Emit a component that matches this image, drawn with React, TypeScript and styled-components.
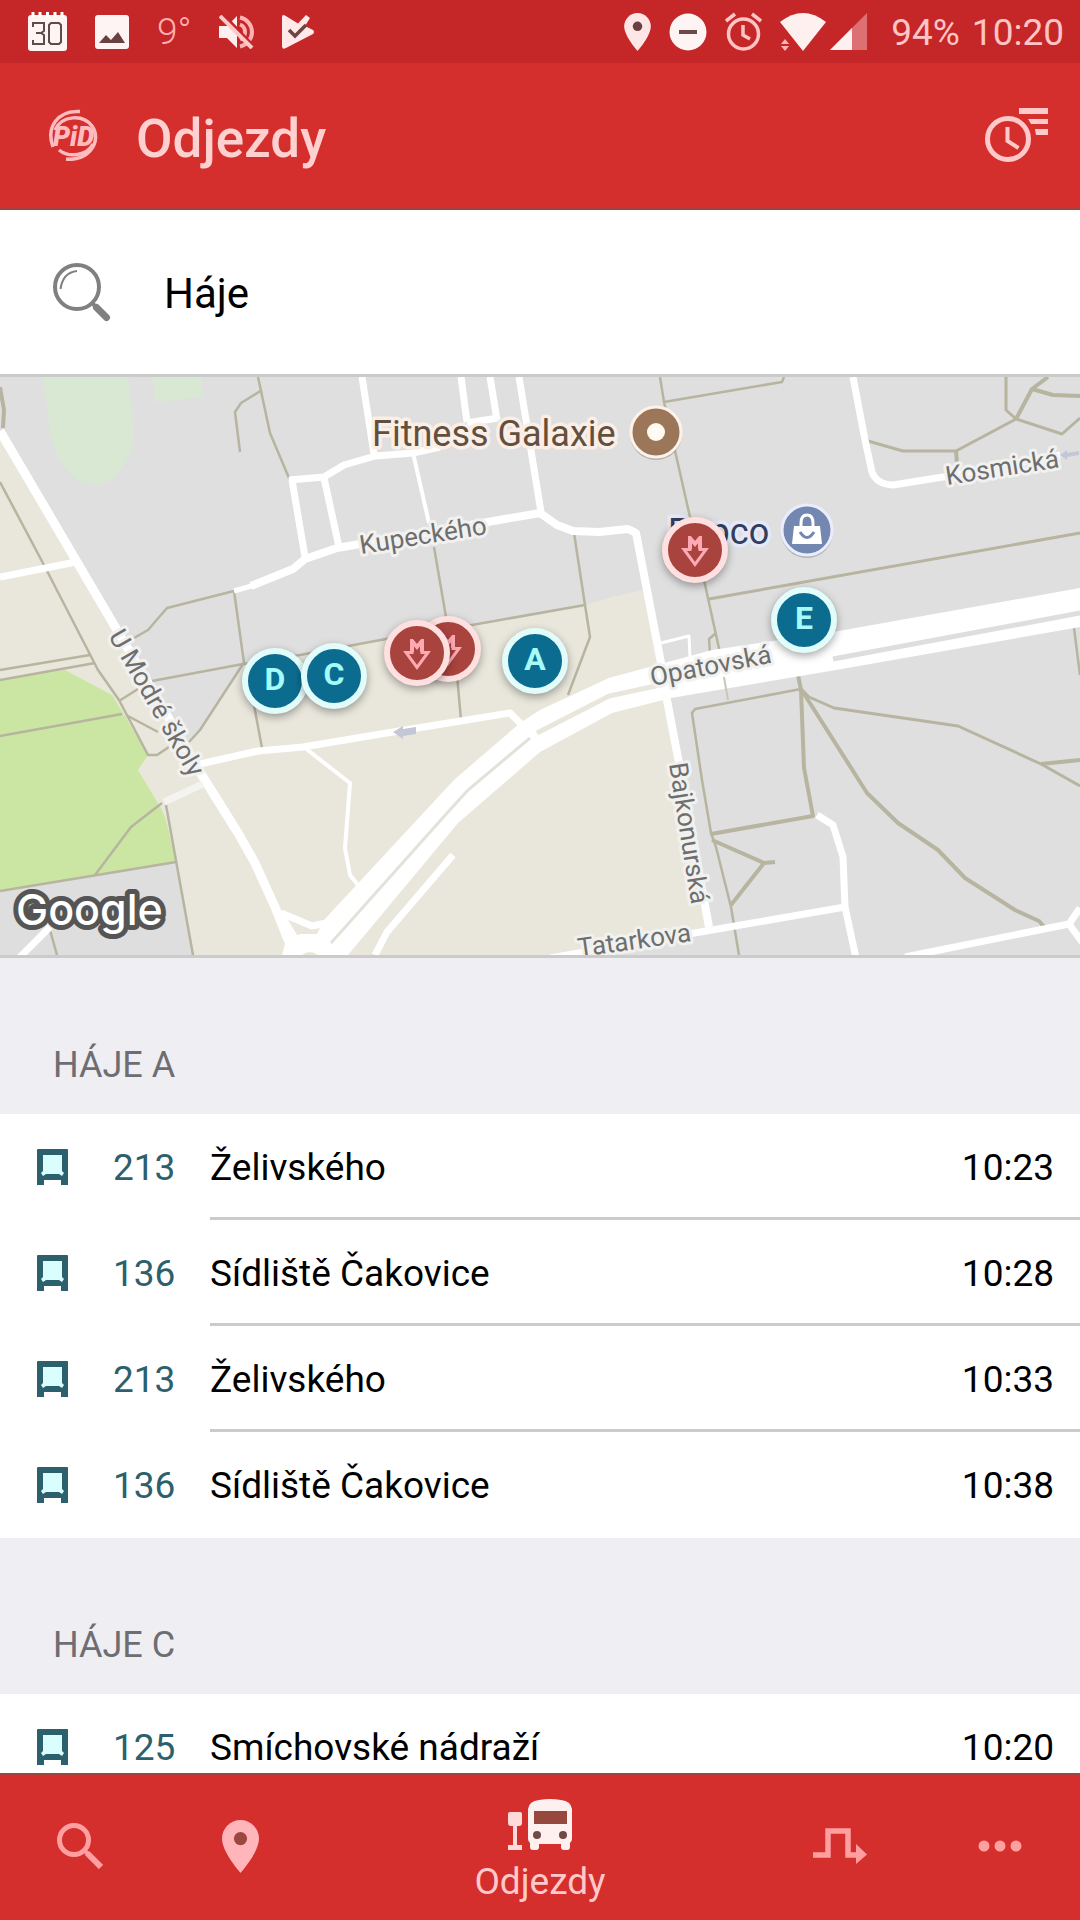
import React from "react";
import styled, { createGlobalStyle } from "styled-components";

const GlobalStyle = createGlobalStyle`
  *, *::before, *::after { box-sizing: border-box; }
  html, body { margin: 0; padding: 0; }
  body { font-family: Roboto, "Noto Sans", sans-serif; color: #000; background: #efeef3; }
  button, input { font: inherit; color: inherit; }
`;

const color = {
  red: "#d42e2d",
  redDark: "#c52627",
  edge: "#a0443c",
  pink: "#ffc9c9",
  pinkDim: "#ff9f9f",
  line: "#cbcbcb",
  section: "#efeef3",
  teal: "#2c606c",
};

const Screen = styled.div`
  display: flex;
  flex-direction: column;
  height: 100vh;
`;

const StatusBar = styled.div`
  display: flex;
  align-items: center;
  justify-content: space-between;
  flex: none;
  height: 63px;
  padding: 0 16px 0 28px;
  background: ${color.redDark};
  color: #ffc4c4;
  font-size: 37px;
  line-height: 44px;
`;

const StatusGroup = styled.div<{ $gap: number }>`
  display: flex;
  align-items: center;
  gap: ${(p) => p.$gap}px;
`;

const Temperature = styled.span`
  width: 34px;
  font-weight: 300;
  color: #ffb0b0;
  white-space: nowrap;
`;

const Clock = styled.span`
  display: flex;
  gap: 12px;
  padding: 2px 0 0 6px;
`;

const Signals = styled.span`
  display: flex;
  gap: 4px;
`;

const AppBar = styled.header`
  display: flex;
  align-items: center;
  flex: none;
  height: 147px;
  padding: 0 32px 0 49px;
  background: ${color.red};
  border-bottom: 3px solid ${color.edge};
`;

const Title = styled.h1`
  flex: 1;
  margin: 0;
  padding: 8px 0 0 36px;
  font-size: 53px;
  line-height: 60px;
  font-weight: 500;
  color: #ffd0d0;
`;

const IconButton = styled.button`
  display: flex;
  padding: 0;
  border: 0;
  background: none;
  cursor: pointer;
`;

const Content = styled.main`
  flex: 1;
  min-height: 0;
  overflow-y: auto;
  scrollbar-width: none;
`;

const SearchRow = styled.label`
  display: flex;
  align-items: center;
  gap: 53px;
  height: 167px;
  padding: 0 52px;
  background: #fff;
  border-bottom: 3px solid ${color.line};
`;

const SearchInput = styled.input`
  flex: 1;
  min-width: 0;
  padding: 4px 0 0;
  border: 0;
  outline: 0;
  background: none;
  font-size: 42px;
  line-height: 50px;
`;

const MapArea = styled.section`
  position: relative;
  overflow: hidden;
  border-bottom: 3px solid ${color.line};
`;

const MapCanvas = styled.svg`
  display: block;
  width: 100%;
  height: auto;
  font-family: Roboto, "Noto Sans", sans-serif;
`;

const Pin = styled.button<{ $x: number; $y: number; $kind: "stop" | "metro" }>`
  position: absolute;
  left: ${(p) => (p.$x / 1080) * 100}%;
  top: ${(p) => (p.$y / 578) * 100}%;
  transform: translate(-50%, -50%);
  display: flex;
  align-items: center;
  justify-content: center;
  width: 66px;
  height: 66px;
  padding: ${(p) => (p.$kind === "stop" ? "0 0 4px" : "4px 0 0")};
  border: 6px solid ${(p) => (p.$kind === "stop" ? "#e2fbfb" : "#ffe0e0")};
  border-radius: 50%;
  background: ${(p) => (p.$kind === "stop" ? "#0c6c90" : "#a8433e")};
  color: #a4fbf8;
  font-size: 32px;
  line-height: 48px;
  font-weight: 700;
  box-shadow: 0 3px 8px rgba(0, 0, 0, 0.35);
  cursor: pointer;
`;

const SectionTitle = styled.h2`
  display: flex;
  align-items: flex-end;
  height: 156px;
  margin: 0;
  padding: 0 53px 27px;
  background: ${color.section};
  color: #6d6d72;
  font-size: 36px;
  line-height: 44px;
  font-weight: 400;
`;

const Departures = styled.ul`
  margin: 0;
  padding: 0;
  list-style: none;
  background: #fff;
`;

const Departure = styled.li`
  display: grid;
  grid-template-columns: 77px 97px 1fr;
  align-items: center;
  height: 106px;
  padding-left: 36px;
  font-size: 37px;
  line-height: 44px;
`;

const LineNumber = styled.span`
  padding-top: 2px;
  color: ${color.teal};
`;

const Trip = styled.span`
  display: flex;
  align-items: center;
  justify-content: space-between;
  height: 106px;
  padding: 4px 26px 0 0;
  border-bottom: 3px solid ${color.line};
  ${Departure}:last-child & { border-bottom-color: transparent; }
`;

const TabBar = styled.nav`
  display: grid;
  grid-template-columns: 160px 160px 1fr 160px 160px;
  flex: none;
  height: 147px;
  background: ${color.red};
  border-top: 3px solid ${color.edge};
`;

const Tab = styled.button<{ $current?: boolean }>`
  display: flex;
  flex-direction: column;
  align-items: center;
  justify-content: center;
  gap: 9px;
  padding: ${(p) => (p.$current ? "6px 0 0" : "0 0 4px")};
  border: 0;
  background: none;
  color: ${color.pink};
  font-size: 37px;
  line-height: 44px;
  cursor: pointer;
`;

const CalendarIcon = () => (
  <svg width="39" height="39" viewBox="0 0 39 39">
    <rect x="0" y="3" width="39" height="36" rx="3" fill="#fff4f4" />
    <path d="M5 0v5M12 0v5M19.500 0v5M27 0v5M34 0v5" stroke="#fff" strokeWidth="3" />
    <g fill="none" stroke="#5f4b48" strokeWidth="2">
      <path d="M5 15v-4h11v8l-3 2 3 2v9h-11v-4M8 21h5" />
      <path d="M23 11h8l2 2v17l-2 2h-8l-2-2v-17z" />
    </g>
  </svg>
);
const PictureIcon = () => (
  <svg width="34" height="34" viewBox="0 0 34 34">
    <rect width="34" height="34" rx="3" fill="#fff4f4" />
    <path d="M4 28l7-8 5 5 7-8 7 11z" fill="#6b4040" />
  </svg>
);
const MutedIcon = () => (
  <svg width="35" height="34" viewBox="0 0 35 34">
    <path d="M0 11h8l10-10v32l-10-10h-8z" fill="#fff0f0" />
    <path d="M21 2.500c7 1.500 12 7.500 12 14.500s-5 13-12 14.500M21 9.500c4 1.500 5 4.500 5 7.500s-1.500 6-5 7.500" fill="none" stroke="#ffb3b3" strokeWidth="4" />
    <path d="M4 0l31 32" stroke={color.redDark} strokeWidth="4" />
    <path d="M1 1l32 32" stroke="#ffc8c8" strokeWidth="4" />
  </svg>
);
const PlayCheckIcon = () => (
  <svg width="33" height="34" viewBox="0 0 33 34">
    <path d="M0 2q0-3 3-1.500l13 8L24 0l4 3-5 8 8 4q2 2 0 4L4 33q-4 2-4-2z" fill="#ffe9e9" />
    <path d="M7 15l6 6L24 10" fill="none" stroke="#6d4542" strokeWidth="3.500" />
  </svg>
);
const PlaceIcon = ({ w, h, fill, hole }: { w: number; h: number; fill: string; hole: string }) => (
  <svg width={w} height={h} viewBox="0 0 14 20">
    <path d="M7 0a7 7 0 0 0-7 7c0 5.250 7 13 7 13s7-7.750 7-13a7 7 0 0 0-7-7z" fill={fill} />
    <circle cx="7" cy="7" r="2.500" fill={hole} />
  </svg>
);
const DoNotDisturbIcon = () => (
  <svg width="38" height="38" viewBox="0 0 38 38">
    <circle cx="19" cy="19" r="18.500" fill="#fff4f4" />
    <path d="M10 19h18" stroke="#6b4b48" strokeWidth="4" />
  </svg>
);
const AlarmIcon = () => (
  <svg width="37" height="39" viewBox="0 0 37 39" fill="none" stroke="#ffc4c4" strokeWidth="3.500">
    <circle cx="18.500" cy="22" r="15" />
    <path d="M18 13v10l7 4M1 9l9-7M36 9l-9-7" />
  </svg>
);
const WifiIcon = () => (
  <svg width="46" height="38" viewBox="0 0 46 38">
    <path d="M0 9Q23-9 46 9L23 38z" fill="#fff0f0" />
    <path d="M1 31l4-5 4 5zM1 33l4 5 4-5z" fill="#ffb3b3" />
  </svg>
);
const SignalIcon = () => (
  <svg width="37" height="38" viewBox="0 0 37 38">
    <path d="M0 37L37 0v37z" fill="#dc7072" />
    <path d="M0 37l22-22v22z" fill="#fff0f0" />
  </svg>
);

const PidLogo = () => (
  <svg width="51" height="52" viewBox="0 0 51 52" role="img" aria-label="PiD">
    <g fill="none" stroke="#ffbcbf" strokeWidth="3.500">
      <path d="M4 38C-3 19 8 1 31 2.500" />
      <path d="M6 21C13 6 34 5 43 17C54 33 38 53 17 50" />
      <path d="M10 41C20 49 38 47 44 35" />
    </g>
    <text x="4" y="37" fontSize="27" fontWeight="900" fontStyle="italic" fill="#ffbcbf" fontFamily="Roboto, sans-serif">PiD</text>
  </svg>
);
const TimetableIcon = () => (
  <svg width="63" height="54" viewBox="0 0 63 54">
    <g fill="none" stroke={color.pink} strokeWidth="5">
      <circle cx="23" cy="31" r="20.500" />
      <path d="M22.500 19v14l11 7" strokeWidth="4" />
    </g>
    <path d="M34 0h29v6H34zM43 11h20v5H46zM50 21h13v6H51z" fill={color.pink} />
  </svg>
);
const MagnifierIcon = () => (
  <svg width="59" height="59" viewBox="0 0 59 59" fill="none" stroke="#808080">
    <circle cx="25" cy="24" r="22" strokeWidth="4" />
    <path d="M8.500 26C10 15 16 9 25 8" strokeWidth="2" />
    <path d="M40 40l5 5" strokeWidth="4" />
    <path d="M44.500 44.500l10 10" strokeWidth="7" strokeLinecap="round" />
  </svg>
);
const BusFrontIcon = () => (
  <svg width="33" height="37" viewBox="0 0 33 37">
    <path d="M1 1q0-1 1-1h29q1 0 1 1v35h-7v-5H8v5H1z" fill={color.teal} />
    <path d="M7 6h19v16l2 2-2 3-3-2H10l-3 2-2-3 2-2z" fill="#dafdfe" />
  </svg>
);
const MetroIcon = () => (
  <svg width="30" height="32" viewBox="0 0 30 32" fill="none" stroke="#ffa9b3">
    <path d="M10 13V2l5 6 5-6v11" strokeWidth="4" />
    <path d="M11.500 13.500H4L15 28.500 26 13.500h-7.500" strokeWidth="3" />
  </svg>
);
const TabSearchIcon = () => (
  <svg width="46" height="46" viewBox="0 0 46 46" fill="none" stroke={color.pinkDim} strokeWidth="5">
    <circle cx="17" cy="17" r="14.500" />
    <path d="M28 28l4 4" strokeWidth="4" />
    <path d="M30 30l14 14" strokeWidth="6" />
  </svg>
);
const TabBusIcon = () => (
  <svg width="64" height="52" viewBox="0 0 64 52">
    <path d="M2 13h10q2 0 2 2v9q0 3-3 3H9v19h5v5H0v-5h5V27H3q-3 0-3-3v-9q0-2 2-2z" fill="#ffdada" />
    <path d="M20 10Q21 2 31 1q11-2 22 0 10 1 11 9v30q0 2-2 4v4q0 3-3 3h-3q-3 0-3-3v-3H31v3q0 3-3 3h-3q-3 0-3-3v-4q-2-2-2-4z" fill="#fff0f0" />
    <path d="M26 12h33v13H26z" fill="#96483f" />
    <circle cx="29" cy="36" r="4" fill="#6f4a47" />
    <circle cx="55" cy="36" r="4" fill="#6f4a47" />
  </svg>
);
const RouteIcon = () => (
  <svg width="54" height="36" viewBox="0 0 54 36">
    <path d="M0 27h15V3h20v24h9" fill="none" stroke={color.pinkDim} strokeWidth="5.500" />
    <path d="M43 16l11 10.500L43 36z" fill={color.pinkDim} />
  </svg>
);
const MoreIcon = () => (
  <svg width="44" height="12" viewBox="0 0 44 12" fill={color.pinkDim}>
    <circle cx="6" cy="6" r="5.500" />
    <circle cx="22" cy="6" r="5.500" />
    <circle cx="38" cy="6" r="5.500" />
  </svg>
);

const StreetLabel = ({ x, y, angle, children }: { x: number; y: number; angle: number; children: string }) => (
  <text
    transform={`translate(${x} ${y}) rotate(${angle})`}
    fontSize="26"
    fill="#6e6e6e"
    stroke="#f1f1ef"
    strokeWidth="6"
    strokeLinejoin="round"
    paintOrder="stroke"
  >
    {children}
  </text>
);

const StreetMap = () => (
  <MapCanvas viewBox="0 377 1080 578" role="img" aria-label="Mapa Háje">
    <rect x="0" y="377" width="1080" height="578" fill="#dfdfdf" />
    <path d="M43 377H128L134 430Q135 450 115 477Q95 492 73 477Q52 455 49 425ZM152 377H201L203 397L155 402Z" fill="#d8e8d3" />
    <g fill="#e9e7dc">
      <path d="M0 431L77 562 134 660 152 683 203 777 165 807 193 955H0Z" />
      <path d="M244 663L300 655 472 625 585 605 612 597 643 590 661 663 667 700 709 927 554 955H193L165 807 150 760 186 742 200 730Z" />
    </g>
    <path d="M0 892L176 862 193 955H0Z" fill="#dedede" />
    <path d="M0 680L65 670 112 695 123 713 148 755 138 770 162 810 166 820 176 862 0 892Z" fill="#cbe6a2" />

    <g fill="none" stroke="#b7b4a0" strokeWidth="2.500" strokeLinejoin="round">
      <path d="M258 377L270 433 289 478M262 390L241 403 235 412 240 452" />
      <path d="M0 387L4 410 3 428" strokeWidth="4" />
      <path d="M0 482L45 567 98 670 119 700 148 755H157L169 747" />
      <path d="M0 670L90 655M0 680L95 663M134 638L148 630 167 608 234 591 244 663M253 700L262 748" />
      <path d="M0 736L122 714M119 701L138 689M126 715L158 732M152 681L243 664 200 730 189 742" />
      <path d="M162 803L131 827 95 875M0 891L176 862M166 805L193 955M50 930L57 955" />
      <path d="M244 664L300 655 386 639 472 625 585 605M434 547L446 617M457 675L461 720" />
      <path d="M660 377L664 402 690 517 704 580 720 653M664 402L782 382 784 377" />
      <path d="M574 533L585 605 590 637 568 695M716 633L709 639 710 653" />
      <path d="M709 599L1080 533M868 441L903 451H956L1016 419M1006 377V410L1016 419 1062 434 1080 418" strokeWidth="3" />
      <path d="M1016 419L1032 389 1048 377M1032 389L1053 395 1080 396M956 451L957 463" strokeWidth="4" />
      <path d="M1074 628L1080 675M801 689L695 709 692 713 702 780 711 833 716 847 731 907 739 955" />
      <path d="M798 675L801 690 804 768 813 816 711 834M712 840L764 863 775 862M764 863L731 905" strokeWidth="4" />
      <path d="M801 689L809 697 834 708 958 726 1041 764 1080 786" strokeWidth="3" />
      <path d="M1041 764L1080 760M801 689L867 793 898 823 938 850 965 878 1015 910 1039 921 1046 929" strokeWidth="4" />
    </g>

    <g fill="none" stroke="#fff" strokeWidth="7" strokeLinejoin="round">
      <path d="M0 431L77 562 117 630 203 777 238 833 255 863 275 907 291 947" strokeWidth="9" />
      <path d="M0 577L76 562M362 377L374 454M289 480L324 477 344 465 375 456 413 453 440 447" />
      <path d="M292 480L305 557M324 478L339 547M461 377L467 422M467 423L498 418M490 377L497 420M519 377L541 512" />
      <path d="M251 586L293 569 305 559 337 548 540 513 557 525 573 531 599 532 628 529 636 533 661 663 667 700 679 763 709 927" strokeWidth="8" />
      <path d="M234 591L255 585" strokeWidth="5" />
      <path d="M413 453L429 523M305 748L350 783 345 848 350 875 358 885" strokeWidth="4" />
      <path d="M661 643L689 636 690 658" strokeWidth="3" />
      <path d="M200 764L258 751 303 747 393 732 510 713 522 725" />
      <path d="M453 855L387 932 375 955M281 913L312 926 331 922M281 915L296 940M19 958L50 927" />
      <path d="M853 377L865 440 872 472Q876 484 893 485L943 477 1060 455" />
      <path d="M817 815L833 825 843 857 845 907 856 958M550 958L735 926 845 907M905 957L1069 924 1080 908M1069 924L1082 942" />
      <path d="M164 802L203 784" stroke="#f3f3f0" />
    </g>
    <path d="M282 955L286 940 300 934 317 934 324 920 454 780 520 723 540 710 609 678 712 650 833 632 1080 588V627L836 670 671 698 612 713 540 752 458 823 348 955Z" fill="#fff" />
    <path d="M331 943L448 812 468 790 530 738" fill="none" stroke="#e3e2da" strokeWidth="3" />
    <path d="M537 733L609 696 660 685" fill="none" stroke="#e9e7dc" strokeWidth="5" />
    <path d="M833 659L1080 613" stroke="#dedede" strokeWidth="5" />
    <path d="M724 677L728 700" stroke="#c9c7b8" strokeWidth="2" />
    <path d="M302 955Q309 949 318 955Z" fill="#e9e7dc" />
    <path d="M393 732l10-6v3l13-2v7l-13 2v3zM1060 455l7-5v3l12-2v4l-12 2v3z" fill="#c3c7d6" />

    <StreetLabel x={361} y={554} angle={-9}>Kupeckého</StreetLabel>
    <StreetLabel x={947} y={485} angle={-9}>Kosmická</StreetLabel>
    <StreetLabel x={652} y={686} angle={-11}>Opatovská</StreetLabel>
    <StreetLabel x={669} y={764} angle={81}>Bajkonurská</StreetLabel>
    <StreetLabel x={108} y={636} angle={60}>U Modré školy</StreetLabel>
    <StreetLabel x={579} y={957} angle={-8}>Tatarkova</StreetLabel>

    <g fontSize="36" strokeWidth="7" strokeLinejoin="round" paintOrder="stroke">
      <text x="372" y="446" fill="#62503f" stroke="#faeee6">Fitness Galaxie</text>
      <text x="668" y="544" fill="#343d5c" stroke="#e4e8f8">Pepco</text>
    </g>
    <circle cx="656" cy="434" r="26" fill="#000" opacity="0.2" />
    <circle cx="656" cy="432" r="25" fill="#9b7658" stroke="#fdf1e8" strokeWidth="3" />
    <circle cx="656" cy="432" r="9" fill="#fffaf2" />
    <circle cx="807" cy="532" r="26" fill="#000" opacity="0.2" />
    <circle cx="807" cy="530" r="25" fill="#7387b0" stroke="#e9eeff" strokeWidth="3" />
    <path d="M794 526h26l2 18h-30z" fill="#fff" />
    <path d="M801 527v-4q0-8 6-8t6 8v4" fill="none" stroke="#fff" strokeWidth="3" />
    <path d="M800 532q7 11 14 0" fill="none" stroke="#7387b0" strokeWidth="3" />
    <text x="16" y="925" fontFamily="Inter, sans-serif" fontSize="43" fontWeight="500" fill="#fff" stroke="#555" strokeWidth="10" strokeLinejoin="round" paintOrder="stroke">Google</text>
  </MapCanvas>
);

type Stop = { x: number; y: number; kind: "stop" | "metro"; label: string };
const stops: Stop[] = [
  { x: 448, y: 272, kind: "metro", label: "Metro" },
  { x: 417, y: 276, kind: "metro", label: "Metro" },
  { x: 695, y: 173, kind: "metro", label: "Metro" },
  { x: 275, y: 304, kind: "stop", label: "D" },
  { x: 334, y: 299, kind: "stop", label: "C" },
  { x: 535, y: 284, kind: "stop", label: "A" },
  { x: 804, y: 243, kind: "stop", label: "E" },
];

const sections = [
  {
    name: "HÁJE A",
    departures: [
      { line: "213", to: "Želivského", time: "10:23" },
      { line: "136", to: "Sídliště Čakovice", time: "10:28" },
      { line: "213", to: "Želivského", time: "10:33" },
      { line: "136", to: "Sídliště Čakovice", time: "10:38" },
    ],
  },
  {
    name: "HÁJE C",
    departures: [{ line: "125", to: "Smíchovské nádraží", time: "10:20" }],
  },
];

export default function App() {
  return (
    <Screen>
      <GlobalStyle />
      <StatusBar>
        <StatusGroup $gap={28}>
          <CalendarIcon />
          <PictureIcon />
          <Temperature>9°</Temperature>
          <MutedIcon />
          <PlayCheckIcon />
        </StatusGroup>
        <StatusGroup $gap={18}>
          <PlaceIcon w={27} h={38} fill="#ffe6e6" hole="#6b4040" />
          <DoNotDisturbIcon />
          <AlarmIcon />
          <Signals>
            <WifiIcon />
            <SignalIcon />
          </Signals>
          <Clock>
            <span>94%</span>
            <time>10:20</time>
          </Clock>
        </StatusGroup>
      </StatusBar>
      <AppBar>
        <PidLogo />
        <Title>Odjezdy</Title>
        <IconButton type="button" aria-label="Čas odjezdu">
          <TimetableIcon />
        </IconButton>
      </AppBar>
      <Content>
        <SearchRow>
          <MagnifierIcon />
          <SearchInput type="text" aria-label="Zastávka" defaultValue="Háje" />
        </SearchRow>
        <MapArea>
          <StreetMap />
          {stops.map((s) => (
            <Pin key={`${s.x}-${s.y}`} type="button" aria-label={s.label} $x={s.x} $y={s.y} $kind={s.kind}>
              {s.kind === "metro" ? <MetroIcon /> : s.label}
            </Pin>
          ))}
        </MapArea>
        {sections.map((section) => (
          <section key={section.name}>
            <SectionTitle>{section.name}</SectionTitle>
            <Departures>
              {section.departures.map((d) => (
                <Departure key={d.time}>
                  <BusFrontIcon />
                  <LineNumber>{d.line}</LineNumber>
                  <Trip>
                    <span>{d.to}</span>
                    <time>{d.time}</time>
                  </Trip>
                </Departure>
              ))}
            </Departures>
          </section>
        ))}
      </Content>
      <TabBar>
        <Tab type="button" aria-label="Hledat"><TabSearchIcon /></Tab>
        <Tab type="button" aria-label="Poloha"><PlaceIcon w={37} h={53} fill="#ffb5ba" hole="#9c4640" /></Tab>
        <Tab type="button" $current><TabBusIcon />Odjezdy</Tab>
        <Tab type="button" aria-label="Trasa"><RouteIcon /></Tab>
        <Tab type="button" aria-label="Další"><MoreIcon /></Tab>
      </TabBar>
    </Screen>
  );
}
